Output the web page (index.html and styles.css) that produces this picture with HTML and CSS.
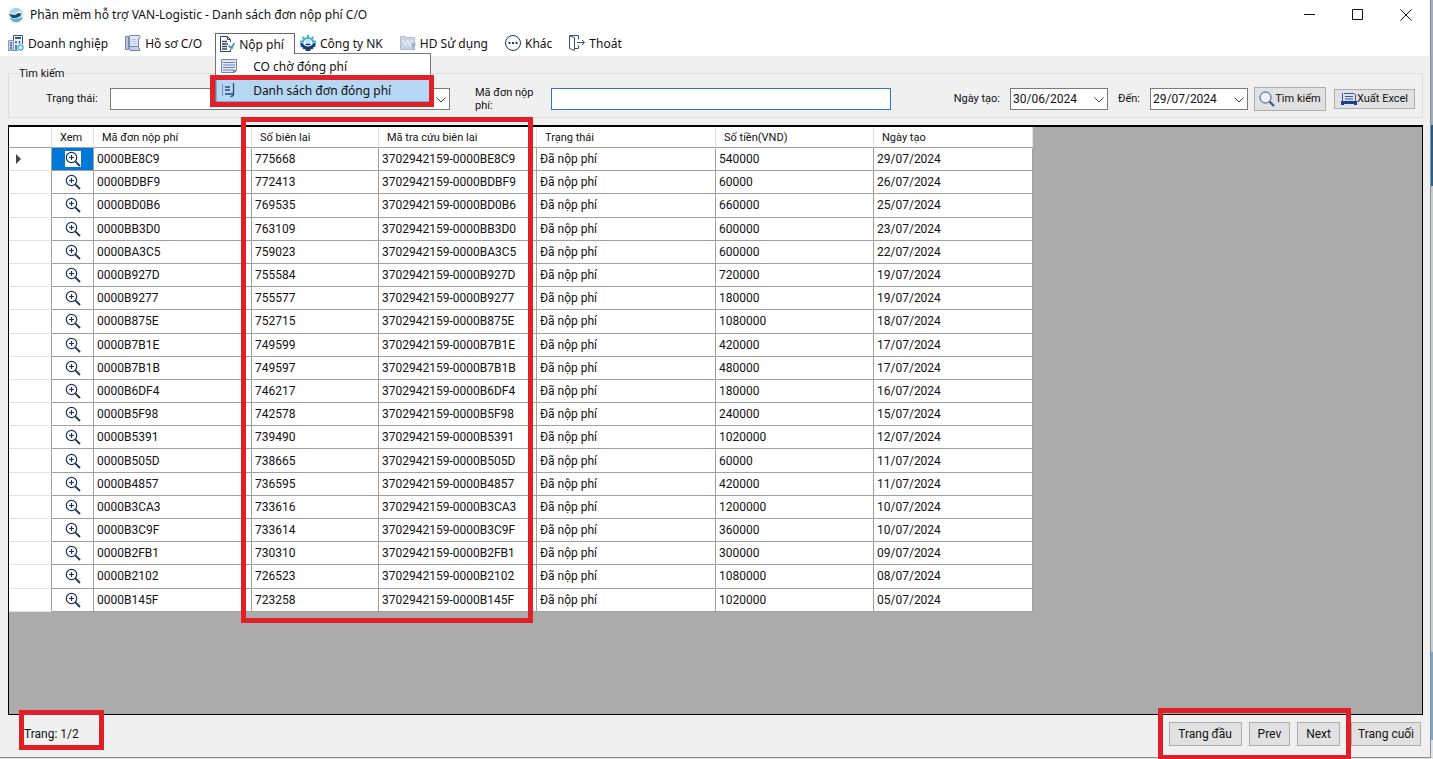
FILE: index.html
```
<!DOCTYPE html>
<html lang="vi">
<head>
    <meta charset="UTF-8">
    <meta name="viewport" content="width=device-width, initial-scale=1.0">
    <title>Phần mềm hỗ trợ VAN-Logistic - Danh sách đơn nộp phí C/O</title>
    <link rel="stylesheet" href="styles.css">
</head>
<body>
    <!-- Iconos compartidos -->
    <svg class="sprite" aria-hidden="true">
        <symbol id="i-zoom" viewBox="0 0 16 16">
            <circle cx="6.5" cy="6.5" r="5.2" fill="#fff" stroke="#1c3058" stroke-width="1.2"/>
            <path d="M4 6.5h5M6.5 4v5" stroke="#1c3058" stroke-width="1.2"/>
            <path d="M10.3 10.3L15 15" stroke="#1c3058" stroke-width="1.8"/>
        </symbol>
    </svg>

    <div class="window">
        <header class="titlebar">
            <svg class="logo" viewBox="0 0 16 16">
                <circle cx="8" cy="8" r="7.5" fill="#cdeaf3"/>
                <path d="M1 6Q4 1 9 1q5 1 6 6l-5-1z" fill="#a3d3e5"/>
                <path d="M1 7l6 1 5-3 1 4-5 2H4z" fill="#224a70"/>
                <path d="M2 11q6 2 13-1-2 5-7 5.500-4-.500-6-4.500z" fill="#5fb4cb"/>
                <path d="M7 6l6-2v2z" fill="#fff"/>
            </svg>
            <h1>Phần mềm hỗ trợ VAN-Logistic - Danh sách đơn nộp phí C/O</h1>
            <div class="controls">
                <button type="button" aria-label="Thu nhỏ"><svg viewBox="0 0 12 12"><path d="M0 5.500h11"/></svg></button>
                <button type="button" aria-label="Phóng to"><svg viewBox="0 0 12 12"><path d="M.5.5h10v10H.5z"/></svg></button>
                <button type="button" aria-label="Đóng"><svg viewBox="0 0 12 12"><path d="M.5.5l11 11M11.500.5l-11 11"/></svg></button>
            </div>
        </header>

        <nav class="menubar">
            <button type="button" class="menu">
                <svg viewBox="0 0 16 16" fill="none" stroke="#34558f">
                    <path d="M5.500 15V.5h9V9" fill="#f1f5fc"/>
                    <path d="M.5 15V5.500h5V15zM0 15.500h10" fill="#d4dff1" stroke="#7e97c4"/>
                    <path d="M7 3h6" stroke-width="2"/>
                    <path d="M2 8h2M2 10.500h2M2 13h2M8 6v2.500M11.500 6v2.500M8 10v5" stroke-width="1.500"/>
                    <circle cx="12.5" cy="12.5" r="2.500" fill="#e6f7fc" stroke="#53b7dd" stroke-width="1.500"/>
                </svg>Doanh nghiệp</button>
            <button type="button" class="menu">
                <svg viewBox="0 0 16 16" stroke="#7488b0">
                    <path d="M.5 1.500h3v13h-3z" fill="#b9c7e3"/>
                    <path d="M4.500.5h10q1.500 1 0 3h-1v8h-9z" fill="#dfe6f4"/>
                    <path d="M3.500 11.500h10l1.500 4H5z" fill="#c4d0e8"/>
                    <path d="M6.500 4.500h5M6.500 6.500h5M6.500 8.500h5" stroke="#b9c7e3"/>
                </svg>Hồ sơ C/O</button>
            <div class="menu-group">
                <button type="button" class="menu open">
                    <svg viewBox="0 0 16 16" fill="none" stroke="#31456c">
                        <path d="M11.500 6V3.500l-3-3h-7v15h10v-2M8.500.5v3h3"/>
                        <path d="M3 5.500h5M3 8h6M3 10.500h5M3 13h5" stroke-width="1.300"/>
                        <path d="M9.500 9.500l2.500 2.500 3.500-5" stroke="#3e8bbb" stroke-width="1.500"/>
                        <path d="M12.500 13.500l2-3" stroke="#3e8bbb"/>
                    </svg>Nộp phí</button>
                <div class="dropdown">
                    <button type="button">
                        <svg viewBox="0 0 16 16" fill="none" stroke="#7186b4">
                            <path d="M.5 1.500h15v11l-2 2H.5z" fill="#dfe6f4"/><path d="M2 4.500h12M2 7h12M2 9.500h12M2 12h11"/><path d="M12.500 15v-2.500H15z" fill="#7186b4"/>
                        </svg>CO chờ đóng phí</button>
                    <button type="button" class="active">
                        <svg viewBox="0 0 16 16" fill="none" stroke="#2c477b">
                            <path d="M1.500 2v12" stroke="#6f8ebb"/><path d="M4 5h5M4 8h5M4 12h8" stroke-width="1.300"/><path d="M12.500 1v11q0 2.500-3 2.500" stroke-width="1.300"/>
                        </svg>Danh sách đơn đóng phí</button>
                    <i class="mark mark-menu"></i>
                </div>
            </div>
            <button type="button" class="menu">
                <svg viewBox="0 0 16 16">
                    <path d="M2.500 8.500a5.500 5.500 0 1 1 11 0" fill="none" stroke="#41b3d8" stroke-width="2"/>
                    <path d="M8 0v3M2.500 2l2 2M13.500 2l-2 2M0 6.500h3M16 6.500h-3" stroke="#41b3d8" stroke-width="2"/>
                    <circle cx="8" cy="6.500" r="2.500" fill="#bde4ef"/>
                    <path d="M0 8l3 .5q1.500 3 5 3t5-3l3-.5-1 4h-1.500l-.5 2H11L10 16H6l-1-2H3l-.5-2H1z" fill="#183e75"/>
                    <path d="M5.500 9.500h5" stroke="#183e75" stroke-width="1.500"/>
                </svg>Công ty NK</button>
            <button type="button" class="menu">
                <svg viewBox="0 0 16 16" fill="#c9d3e6" stroke="#b1bdd6">
                    <path d="M.5 14.500v-13h5l1 1h8v12z"/><path d="M3 5l2.500 6 2-6 2.500 6 2-6" fill="none" stroke="#f4f7fc"/><path d="M11 8.500h4.500l-2 7z" fill="#9fb0d2"/>
                </svg>HD Sử dụng</button>
            <button type="button" class="menu">
                <svg viewBox="0 0 16 16" fill="none" stroke="#1f3761">
                    <circle cx="8" cy="8" r="7.500"/><path d="M3.500 8h2M7 8h2M10.500 8h2" stroke-width="2"/>
                </svg>Khác</button>
            <button type="button" class="menu">
                <svg viewBox="0 0 16 16" fill="none" stroke="#34527f">
                    <path d="M.5 1l5 1.500v13l-5-2zM.5.5h9v4M5.500 13.500h4v-3M8 7.500h7.500M13 5l2.500 2.500L13 10"/>
                </svg>Thoát</button>
        </nav>

        <main>
            <form>
                <fieldset class="search">
                    <legend>Tìm kiếm</legend>
                    <label class="lbl-status" for="status">Trạng thái:</label>
                    <div class="picker picker-status">
                        <select id="status"><option></option><option>Đã nộp phí</option></select>
                        <svg viewBox="0 0 10 6"><path d="M.5.5L5 5 9.500.5"/></svg>
                    </div>
                    <label class="lbl-code" for="code">Mã đơn nộp phí:</label>
                    <input class="code" id="code" type="text">
                    <div class="range">
                        <label for="from">Ngày tạo:</label>
                        <div class="picker">
                            <input id="from" type="text" value="30/06/2024">
                            <svg viewBox="0 0 10 6"><path d="M.5.5L5 5 9.500.5"/></svg>
                        </div>
                        <label for="to">Đến:</label>
                        <div class="picker">
                            <input id="to" type="text" value="29/07/2024">
                            <svg viewBox="0 0 10 6"><path d="M.5.5L5 5 9.500.5"/></svg>
                        </div>
                    </div>
                    <button type="button" class="btn btn-search">
                        <svg viewBox="0 0 16 16" fill="none" stroke="#344c8c"><circle cx="6.500" cy="6.500" r="5.500" fill="#edf2fd"/><path d="M10.500 10.500l4.500 4.500" stroke-width="2"/></svg>Tìm kiếm</button>
                    <button type="button" class="btn btn-excel">
                        <svg viewBox="0 0 16 14" fill="none" stroke="#3456a5"><path d="M1.500 1v9M3 1.500h10l1.500 1.500v6M4 4.500h8M4 7h8"/><path d="M0 9h16v4h-3v-1H3v1H0z" fill="#16418e" stroke="none"/></svg>Xuất Excel</button>
                </fieldset>
            </form>

            <div class="grid">
                <table>
                    <colgroup>
                        <col class="c-head"><col class="c-view"><col class="c-code"><col class="c-num">
                        <col class="c-lookup"><col class="c-state"><col class="c-money"><col class="c-date">
                    </colgroup>
                    <thead>
                        <tr>
                            <th></th><th>Xem</th><th>Mã đơn nộp phí</th><th>Số biên lai</th><th>Mã tra cứu biên lai</th>
                            <th>Trạng thái</th><th>Số tiền(VND)</th><th>Ngày tạo</th>
                        </tr>
                    </thead>
                    <tbody id="rows"></tbody>
                </table>
                <i class="mark mark-grid"></i>
            </div>

            <footer class="pager">
                <div class="page-info">Trang: 1/2<i class="mark mark-page"></i></div>
                <div class="page-nav">
                    <button type="button" class="btn btn-wide">Trang đầu</button>
                    <button type="button" class="btn">Prev</button>
                    <button type="button" class="btn">Next</button>
                    <i class="mark mark-nav"></i>
                </div>
                <button type="button" class="btn btn-last">Trang cuối</button>
            </footer>
        </main>
    </div>

    <script>
        // ma don, so bien lai, so tien, ngay tao
        let donNopPhi = [
            ["0000BE8C9", "775668", "540000", "29/07/2024"],
            ["0000BDBF9", "772413", "60000", "26/07/2024"],
            ["0000BD0B6", "769535", "660000", "25/07/2024"],
            ["0000BB3D0", "763109", "600000", "23/07/2024"],
            ["0000BA3C5", "759023", "600000", "22/07/2024"],
            ["0000B927D", "755584", "720000", "19/07/2024"],
            ["0000B9277", "755577", "180000", "19/07/2024"],
            ["0000B875E", "752715", "1080000", "18/07/2024"],
            ["0000B7B1E", "749599", "420000", "17/07/2024"],
            ["0000B7B1B", "749597", "480000", "17/07/2024"],
            ["0000B6DF4", "746217", "180000", "16/07/2024"],
            ["0000B5F98", "742578", "240000", "15/07/2024"],
            ["0000B5391", "739490", "1020000", "12/07/2024"],
            ["0000B505D", "738665", "60000", "11/07/2024"],
            ["0000B4857", "736595", "420000", "11/07/2024"],
            ["0000B3CA3", "733616", "1200000", "10/07/2024"],
            ["0000B3C9F", "733614", "360000", "10/07/2024"],
            ["0000B2FB1", "730310", "300000", "09/07/2024"],
            ["0000B2102", "726523", "1080000", "08/07/2024"],
            ["0000B145F", "723258", "1020000", "05/07/2024"]
        ];

        document.getElementById("rows").innerHTML = donNopPhi.map((d, i) => `
            <tr${i === 0 ? ' class="current"' : ''}>
                <td></td>
                <td><button type="button" class="view" aria-label="Xem ${d[0]}"><svg><use href="#i-zoom"/></svg></button></td>
                <td>${d[0]}</td><td>${d[1]}</td><td>3702942159-${d[0]}</td>
                <td>Đã nộp phí</td><td>${d[2]}</td><td>${d[3]}</td>
            </tr>`).join("");
    </script>
</body>
</html>
```
FILE: styles.css
```
* {
    box-sizing: border-box;
}
body {
    margin: 0;
    height: 100vh;
    padding: 0 2px 1px 0;
    overflow: hidden;
    background: linear-gradient(#9fb0b5 125px, #1f5c8c 125px, #2a6496 186px, #c4ccd0 186px, #c4ccd0 652px, #7fa6c0 652px, #7fa6c0 740px, #e4e4e4 740px);
    font-family: Roboto, "Liberation Sans", sans-serif;
    font-size: 11px;
    color: #111;
}
button, input, select {
    font: inherit;
    color: inherit;
}
.sprite {
    position: absolute;
    width: 0;
    height: 0;
}
.window {
    display: flex;
    flex-direction: column;
    height: 100%;
    background: #f0f0f0;
    border-right: 1px solid #8a9295;
    border-bottom: 1px solid #8a8a8a;
}

/* title bar */
.titlebar {
    display: flex;
    align-items: center;
    flex: none;
    height: 29px;
    padding-left: 8px;
    background: #fff;
    font-family: "Noto Sans", "Open Sans", sans-serif;
}
.logo {
    width: 16px;
    height: 16px;
    margin-right: 6px;
}
.titlebar h1 {
    margin: 0;
    font-size: 12px;
    font-weight: 400;
}
.controls {
    display: flex;
    margin-left: auto;
}
.controls button {
    display: flex;
    align-items: center;
    justify-content: center;
    width: 48px;
    height: 28px;
    padding: 0;
    border: 0;
    background: none;
}
.controls svg {
    width: 12px;
    height: 12px;
    fill: none;
    stroke: #111;
}

/* menu */
.menubar {
    display: flex;
    flex: none;
    height: 27px;
    padding: 4px 0 0 4px;
    background: #fff;
    font-family: "Noto Sans", "Open Sans", sans-serif;
    font-size: 12px;
}
.menu {
    display: flex;
    align-items: center;
    gap: 4px;
    height: 20px;
    margin-right: 9px;
    padding: 0 4px;
    border: 0;
    background: none;
    white-space: nowrap;
}
.menu svg, .dropdown svg {
    flex: none;
    width: 16px;
    height: 16px;
}
.menu-group {
    position: relative;
}
.menu.open {
    position: relative;
    z-index: 4;
    height: 21px;
    margin-right: 1px;
    padding: 0 10px 0 3px;
    border: 1px solid #666;
    border-bottom: 0;
    background: #fff;
}
.dropdown {
    position: absolute;
    z-index: 3;
    top: 20px;
    left: 0;
    width: 216px;
    border: 1px solid #777;
    background: #fff;
}
.dropdown button {
    display: flex;
    align-items: center;
    gap: 16px;
    width: 100%;
    height: 24px;
    padding: 0 4px;
    border: 1px solid transparent;
    background: none;
    white-space: nowrap;
}
.dropdown .active {
    border-color: #7caedb;
    background: #b5d7f3;
}

/* red frames */
.mark {
    position: absolute;
    z-index: 5;
    border: 5px solid #e01f27;
    pointer-events: none;
}
.mark-menu {
    inset: 21px -4px -5px -6px;
}
.mark-grid {
    top: -10px;
    left: 232px;
    width: 292px;
    height: 506px;
}
.mark-page {
    inset: -17px -25px -9px -5px;
}
.mark-nav {
    inset: -14px -11px -14px -11px;
}

main {
    display: flex;
    flex-direction: column;
    flex: 1;
    min-height: 0;
    padding: 11px 7px 0 8px;
}

/* search box */
.search {
    display: flex;
    align-items: center;
    height: 51px;
    margin: 0;
    padding: 0 7px 0 9px;
    border: 1px solid #dcdcdc;
    white-space: nowrap;
}
.search legend {
    padding: 0 1px;
}
.lbl-status {
    width: 64px;
    margin-left: 28px;
}
.lbl-code {
    width: 64px;
    margin: 0 12px 0 25px;
    white-space: normal;
}
.picker {
    position: relative;
    width: 98px;
    height: 22px;
}
.picker-status {
    width: 340px;
}
.picker input, .picker select {
    width: 100%;
    height: 100%;
    padding: 0 20px 0 2px;
    border: 1px solid #7a7a7a;
    border-radius: 0;
    background: #fff;
    font-size: 12px;
    appearance: none;
}
.picker svg {
    position: absolute;
    top: 9px;
    right: 4px;
    width: 10px;
    height: 6px;
    fill: none;
    stroke: #444;
}
.code {
    width: 340px;
    height: 22px;
    border: 1px solid #2a78c4;
    background: #fff;
}
.range {
    display: flex;
    align-items: center;
    gap: 10px;
    margin: 0 6px 0 auto;
}
.btn {
    height: 24px;
    padding: 0 8px;
    border: 1px solid #adadad;
    background: #e1e1e1;
    white-space: nowrap;
}
.btn svg {
    flex: none;
    width: 16px;
    height: 16px;
}
.btn-search, .btn-excel {
    display: flex;
    align-items: center;
    justify-content: center;
    width: 72px;
    padding: 0 2px;
}
.btn-excel {
    width: 81px;
    height: 20px;
    margin-left: 8px;
}

/* data grid */
.grid {
    position: relative;
    flex: 1;
    min-height: 0;
    margin-top: 7px;
    border: 1px solid #000;
    border-top-width: 2px;
    background: #ababab;
}
table {
    width: 1024px;
    height: 485px;
    table-layout: fixed;
    border-collapse: separate;
    border-spacing: 0;
    background: #fff;
}
.c-head {
    width: 43px;
}
.c-view {
    width: 42px;
}
.c-code, .c-lookup, .c-money {
    width: 158px;
}
.c-num {
    width: 127px;
}
.c-state {
    width: 179px;
}
.c-date {
    width: 159px;
}
th, td {
    padding: 0 3px;
    border-right: 1px solid #a0a0a0;
    border-bottom: 1px solid #a0a0a0;
    text-align: left;
    white-space: nowrap;
}
th {
    height: 21px;
    padding: 0 8px;
    border-right-color: #e2e2e2;
    font-weight: 400;
}
td {
    font-size: 12px;
}
td:first-child {
    padding-left: 7px;
    border-bottom-color: #e2e2e2;
}
.view {
    display: block;
    width: 16px;
    height: 16px;
    margin: 0 auto;
    padding: 0;
    border: 0;
    background: #fff;
}
.view svg {
    display: block;
    width: 16px;
    height: 16px;
}
.current td:nth-child(2) {
    background: #0078d7;
}
.current td:first-child::before {
    content: "";
    display: block;
    width: 0;
    border: 5px solid transparent;
    border-left-color: #444;
    border-right: 0;
}

/* pager */
.pager {
    display: flex;
    align-items: center;
    flex: none;
    height: 42px;
    padding: 0 2px 4px 16px;
    font-size: 12px;
}
.page-info {
    position: relative;
}
.page-nav {
    position: relative;
    display: flex;
    gap: 7px;
    margin: 0 11px 0 auto;
}
.btn-wide {
    width: 73px;
}
.btn-last {
    width: 70px;
    padding: 0;
}
```
